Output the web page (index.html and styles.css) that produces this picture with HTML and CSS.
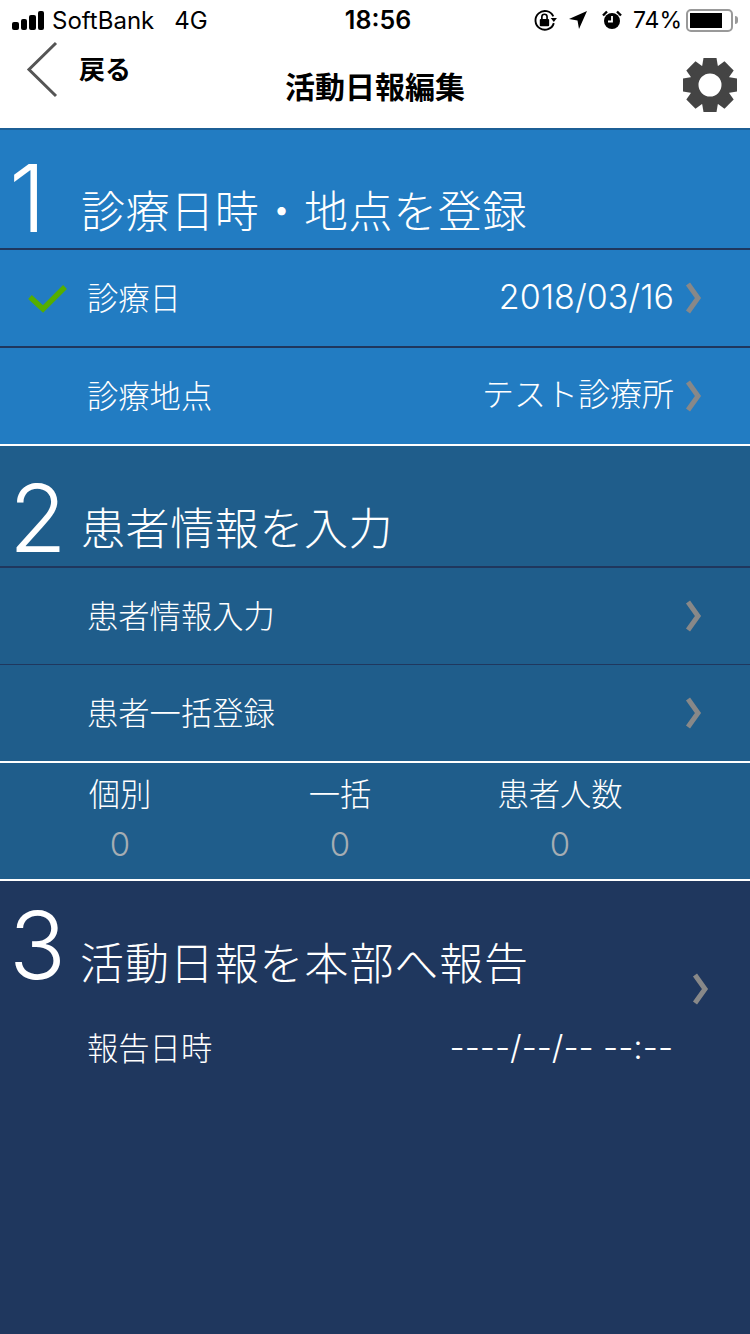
FILE: index.html
```html
<!DOCTYPE html>
<html lang="ja">
<head>
    <meta charset="UTF-8">
    <meta name="viewport" content="width=device-width, initial-scale=1.0">
    <title>活動日報編集</title>
    <link rel="stylesheet" href="styles.css">
</head>
<body>

    <!-- Status bar -->
    <div class="status-bar">
        <div class="status-left">
            <span class="signal"><i></i><i></i><i></i><i></i></span>
            <span>SoftBank</span>
            <span class="network">4G</span>
        </div>
        <div class="status-time">18:56</div>
        <div class="status-right">
            <svg class="icon-lock" width="25" height="23" viewBox="0 0 24 22">
                <path d="M20 13.500A9 9 0 1 1 19.500 7" fill="none" stroke="#000" stroke-width="1.800"/>
                <path d="M17 8.500h6l-3 4z" fill="#000"/>
                <rect x="6.500" y="9.500" width="9" height="7" rx="1" fill="#000"/>
                <path d="M8.500 10V7.500a2.500 2.500 0 0 1 5 0V10" fill="none" stroke="#000" stroke-width="1.600"/>
            </svg>
            <svg class="icon-location" width="20" height="20" viewBox="0 0 20 20">
                <path d="M19 1L1 9l8.500 1.500L11 19z" fill="#000"/>
            </svg>
            <svg class="icon-alarm" width="20" height="20" viewBox="0 0 20 20">
                <circle cx="10" cy="11" r="8" fill="#000"/>
                <path d="M10 6v5.500H6" fill="none" stroke="#fff" stroke-width="1.800"/>
                <path d="M1 5.500L5 1.500M19 5.500L15 1.500" stroke="#000" stroke-width="2.400"/>
            </svg>
            <span class="battery-text">74%</span>
            <span class="battery"><span class="battery-level"></span></span>
            <span class="battery-tip"></span>
        </div>
    </div>

    <!-- Navigation -->
    <div class="nav-bar">
        <div class="nav-back">
            <svg width="32" height="58" viewBox="0 0 32 58">
                <path d="M30 2L3 28.500L30 55" fill="none" stroke="#555" stroke-width="3"/>
            </svg>
            <span class="back-label">戻る</span>
        </div>
        <div class="nav-title">活動日報編集</div>
        <svg class="nav-gear" width="54" height="54" viewBox="0 0 54 54">
            <g fill="#444">
                <path d="M20.500 0h13l2 12h-17z"/>
                <path d="M20.500 0h13l2 12h-17z" transform="rotate(45 27 27)"/>
                <path d="M20.500 0h13l2 12h-17z" transform="rotate(90 27 27)"/>
                <path d="M20.500 0h13l2 12h-17z" transform="rotate(135 27 27)"/>
                <path d="M20.500 0h13l2 12h-17z" transform="rotate(180 27 27)"/>
                <path d="M20.500 0h13l2 12h-17z" transform="rotate(225 27 27)"/>
                <path d="M20.500 0h13l2 12h-17z" transform="rotate(270 27 27)"/>
                <path d="M20.500 0h13l2 12h-17z" transform="rotate(315 27 27)"/>
            </g>
            <circle cx="27" cy="27" r="16" fill="none" stroke="#444" stroke-width="9"/>
        </svg>
    </div>

    <!-- Section 1 -->
    <div class="section section-one">
        <div class="section-head">
            <span class="section-num">1</span>
            <span class="section-title">診療日時・地点を登録</span>
        </div>
        <div class="row row-dark-line">
            <svg class="check" width="40" height="28" viewBox="0 0 40 28">
                <path d="M2 12l13 12L37 2" fill="none" stroke="#55ae00" stroke-width="5.500"/>
            </svg>
            <span class="row-label">診療日</span>
            <span class="row-value value-num">2018/03/16</span>
            <svg class="chevron" width="18" height="34" viewBox="0 0 18 34"><path d="M3 3l10 14L3 31" fill="none" stroke="#888" stroke-width="5"/></svg>
        </div>
        <div class="row">
            <span class="row-label">診療地点</span>
            <span class="row-value value-place">テスト診療所</span>
            <svg class="chevron" width="18" height="34" viewBox="0 0 18 34"><path d="M3 3l10 14L3 31" fill="none" stroke="#888" stroke-width="5"/></svg>
        </div>
    </div>

    <!-- Section 2 -->
    <div class="section section-two">
        <div class="section-head">
            <span class="section-num">2</span>
            <span class="section-title">患者情報を入力</span>
        </div>
        <div class="row row-thin-line">
            <span class="row-label">患者情報入力</span>
            <svg class="chevron" width="18" height="34" viewBox="0 0 18 34"><path d="M3 3l10 14L3 31" fill="none" stroke="#888" stroke-width="5"/></svg>
        </div>
        <div class="row row-white-line">
            <span class="row-label">患者一括登録</span>
            <svg class="chevron" width="18" height="34" viewBox="0 0 18 34"><path d="M3 3l10 14L3 31" fill="none" stroke="#888" stroke-width="5"/></svg>
        </div>
        <div class="counts">
            <div class="count"><span>個別</span><span class="count-num">0</span></div>
            <div class="count"><span>一括</span><span class="count-num">0</span></div>
            <div class="count"><span>患者人数</span><span class="count-num">0</span></div>
        </div>
    </div>

    <!-- Section 3 -->
    <div class="section section-three">
        <div class="section-head">
            <span class="section-num">3</span>
            <span class="section-title">活動日報を本部へ報告</span>
            <svg class="chevron" width="18" height="34" viewBox="0 0 18 34"><path d="M3 3l10 14L3 31" fill="none" stroke="#888" stroke-width="5"/></svg>
        </div>
        <div class="report-row">
            <span class="row-label">報告日時</span>
            <span class="row-value value-dashes">----/--/-- --:--</span>
        </div>
    </div>

</body>
</html>
```

FILE: styles.css
```css
* {
    box-sizing: border-box;
}

body {
    margin: 0;
    width: 750px;
    height: 1334px;
    overflow: hidden;
    display: flex;
    flex-direction: column;
    font-family: Inter, "Noto Sans CJK JP", sans-serif;
    background-color: #fff;
    color: #fff;
}

/* Status bar */
.status-bar {
    height: 40px;
    padding: 0 12px;
    display: grid;
    grid-template-columns: 1fr auto 1fr;
    align-items: center;
    color: #000;
    font-size: 23px;
}

.status-left,
.status-right {
    display: flex;
    align-items: center;
}

.status-left {
    font-size: 24px;
}

.status-right {
    justify-content: flex-end;
}

.signal {
    display: flex;
    align-items: flex-end;
    gap: 2px;
    margin-right: 8px;
}

.signal i {
    display: block;
    width: 6.500px;
    border-radius: 2px;
    background-color: #000;
}

.signal i:nth-child(1) { height: 8px; }
.signal i:nth-child(2) { height: 11px; }
.signal i:nth-child(3) { height: 15px; }
.signal i:nth-child(4) { height: 19px; }

.network {
    margin-left: 20px;
}

.status-time {
    font-weight: 600;
    font-size: 25px;
    margin-left: 6px;
}

.icon-lock {
    margin-right: 10px;
}

.icon-location {
    margin-right: 14px;
}

.icon-alarm {
    margin-right: 11px;
}

.battery-text {
    margin-right: 4px;
}

.battery {
    width: 47px;
    height: 23px;
    border: 2px solid #999;
    border-radius: 5px;
    padding: 2px;
    display: block;
}

.battery-level {
    display: block;
    width: 32px;
    height: 15px;
    background-color: #000;
}

.battery-tip {
    width: 3px;
    height: 8px;
    margin-left: 2px;
    background-color: #999;
    border-radius: 0 3px 3px 0;
}

/* Navigation */
.nav-bar {
    height: 88px;
    display: grid;
    grid-template-columns: 1fr auto 1fr;
    align-items: start;
    color: #000;
}

.nav-back {
    display: flex;
    align-items: flex-start;
    padding-left: 26px;
    padding-top: 1px;
}

.back-label {
    font-size: 26px;
    font-weight: 700;
    margin-left: 21px;
    margin-top: 11px;
    line-height: 36px;
}

.nav-title {
    font-size: 30px;
    font-weight: 700;
    line-height: 40px;
    margin-top: 27px;
}

.nav-gear {
    justify-self: end;
    margin: 18px 13px 0 0;
}

/* Sections */
.section-one {
    height: 318px;
    background-color: #227cc2;
    border-top: 2px solid #1c5f96;
    border-bottom: 2px solid #fff;
}

.section-two {
    height: 435px;
    background-color: #1f5d8b;
    border-bottom: 2px solid #fff;
}

.section-three {
    flex: 1;
    background-color: #1f375e;
}

.section-head {
    display: flex;
    align-items: flex-end;
    padding-left: 9px;
    height: 120px;
    border-bottom: 2px solid #1f375e;
}

.section-two .section-head {
    height: 122px;
}

.section-three .section-head {
    height: 118px;
    border-bottom: none;
    position: relative;
}

.section-num {
    font-size: 94px;
    font-weight: 300;
    line-height: 100px;
    width: 72px;
    margin-bottom: 0;
}

.section-title {
    font-size: 44px;
    font-weight: 300;
    line-height: 60px;
    margin-bottom: 6px;
    letter-spacing: 0.600px;
}

.section-two .section-num {
    margin-bottom: -2px;
}

.section-two .section-title {
    margin-bottom: 7px;
}

.section-three .section-num {
    margin-bottom: 4px;
}

.section-three .section-title {
    margin: 0 0 5px -1px;
    letter-spacing: 0.900px;
}

.section-three .chevron {
    position: absolute;
    right: 40px;
    top: 87px;
}

.row {
    height: 98px;
    display: flex;
    align-items: center;
    padding-left: 87px;
    padding-right: 47px;
    padding-bottom: 4px;
    position: relative;
}

.section-one .row:last-child {
    height: 96px;
}

.row-dark-line {
    border-bottom: 2px solid #1f375e;
}

.row-thin-line {
    height: 97px;
    border-bottom: 1px solid #1f375e;
}

.row-white-line {
    border-bottom: 2px solid #fff;
}

.row-label {
    font-size: 31.300px;
    font-weight: 300;
    flex: 1;
}

.row-value {
    font-size: 32px;
    font-weight: 300;
    margin-right: 11px;
}

.value-num {
    font-size: 34px;
}

.value-place {
    margin-bottom: 4px;
}

.value-dashes {
    font-size: 33.400px;
}

.chevron {
    margin-top: 4px;
}

.check {
    position: absolute;
    left: 28px;
    top: 35px;
}

/* Counts */
.counts {
    display: flex;
    padding-top: 9px;
}

.count {
    width: 220px;
    display: flex;
    flex-direction: column;
    align-items: center;
    font-size: 31.300px;
    font-weight: 300;
    line-height: 46px;
}

.count:first-child {
    margin-left: 10px;
}

.count-num {
    color: #a5adb3;
    font-size: 33px;
    line-height: 52px;
}

/* Report row */
.report-row {
    display: flex;
    align-items: center;
    padding: 25px 77px 0 87px;
}

.report-row .row-value {
    margin-right: 0;
}
```
